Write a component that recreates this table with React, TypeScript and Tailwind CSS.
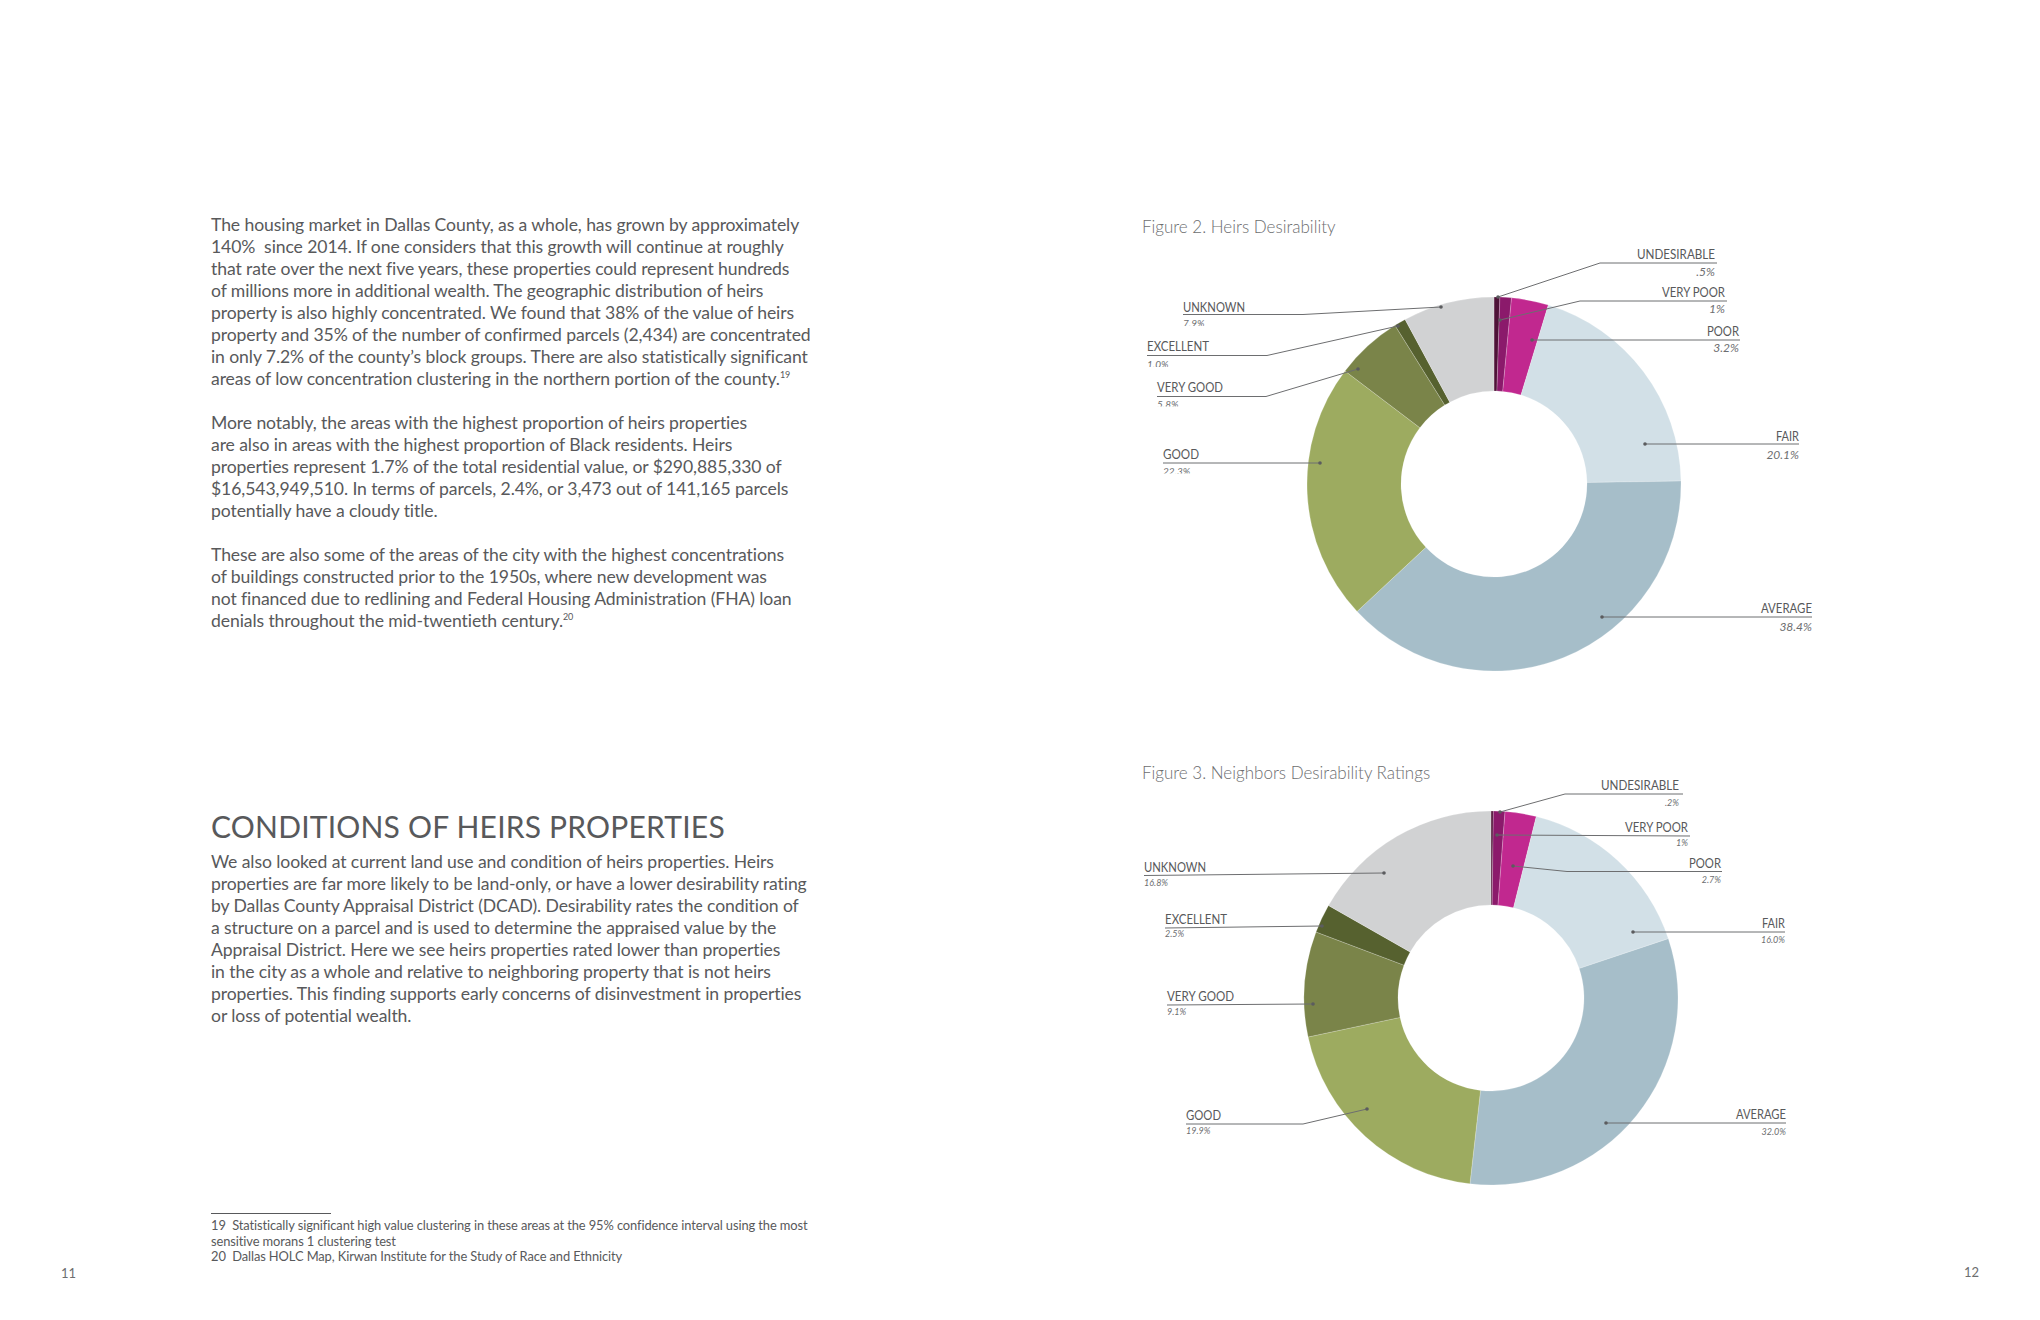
import React from 'react';

// Donut charts: angles measured clockwise from 12 o'clock
type Slice = { value: number; color: string };

type Label = {
  name: string;
  pct: string;
  anchor: 'start' | 'end';
  x: number;
  y: number;
  tl: number;
  line: [number, number][];
  pctY: number;
  pctSize: number;
  clipY?: number;
};

const COLORS = {
  undesirable: '#4e1237',
  veryPoor: '#8b1a6b',
  poor: '#c1288f',
  fair: '#d2e0e7',
  average: '#a6bec9',
  good: '#9dab60',
  veryGood: '#7a8449',
  excellent: '#56612f',
  unknown: '#d1d2d3',
};

const heirsSlices: Slice[] = [
  { value: 0.5, color: COLORS.undesirable },
  { value: 1, color: COLORS.veryPoor },
  { value: 3.2, color: COLORS.poor },
  { value: 20.1, color: COLORS.fair },
  { value: 38.4, color: COLORS.average },
  { value: 22.3, color: COLORS.good },
  { value: 5.8, color: COLORS.veryGood },
  { value: 1.0, color: COLORS.excellent },
  { value: 7.9, color: COLORS.unknown },
];

const neighborSlices: Slice[] = [
  { value: 0.2, color: COLORS.undesirable },
  { value: 1, color: COLORS.veryPoor },
  { value: 2.7, color: COLORS.poor },
  { value: 16.0, color: COLORS.fair },
  { value: 32.0, color: COLORS.average },
  { value: 19.9, color: COLORS.good },
  { value: 9.1, color: COLORS.veryGood },
  { value: 2.5, color: COLORS.excellent },
  { value: 16.8, color: COLORS.unknown },
];

const heirsLabels: Label[] = [
  { name: 'UNDESIRABLE', pct: '.5%', anchor: 'end', x: 1715, y: 259, tl: 78, line: [[1717, 263], [1600, 263], [1498, 297]], pctY: 276, pctSize: 12 },
  { name: 'VERY POOR', pct: '1%', anchor: 'end', x: 1725, y: 297, tl: 63, line: [[1727, 301], [1580, 301], [1500, 320]], pctY: 313, pctSize: 12 },
  { name: 'POOR', pct: '3.2%', anchor: 'end', x: 1739, y: 336, tl: 32, line: [[1740, 340], [1532, 340]], pctY: 352, pctSize: 12 },
  { name: 'FAIR', pct: '20.1%', anchor: 'end', x: 1799, y: 441, tl: 23, line: [[1799, 444], [1645, 444]], pctY: 459, pctSize: 12 },
  { name: 'AVERAGE', pct: '38.4%', anchor: 'end', x: 1812, y: 613, tl: 51, line: [[1812, 617], [1602, 617]], pctY: 631, pctSize: 12 },
  { name: 'UNKNOWN', pct: '7.9%', anchor: 'start', x: 1183, y: 312, tl: 62, line: [[1183, 314.5], [1303, 314.5], [1441, 307]], pctY: 327, pctSize: 10, clipY: 326 },
  { name: 'EXCELLENT', pct: '1.0%', anchor: 'start', x: 1147, y: 351, tl: 62, line: [[1147, 355.5], [1267, 355.5], [1398, 326]], pctY: 368, pctSize: 10, clipY: 367 },
  { name: 'VERY GOOD', pct: '5.8%', anchor: 'start', x: 1157, y: 392, tl: 66, line: [[1157, 396.5], [1266, 396.5], [1358, 369]], pctY: 407.5, pctSize: 10, clipY: 406.5 },
  { name: 'GOOD', pct: '22.3%', anchor: 'start', x: 1163, y: 459, tl: 36, line: [[1163, 463], [1320, 463]], pctY: 474.5, pctSize: 10, clipY: 473.5 },
];

const neighborLabels: Label[] = [
  { name: 'UNDESIRABLE', pct: '.2%', anchor: 'end', x: 1679, y: 790, tl: 78, line: [[1683, 794], [1565, 794], [1500, 812]], pctY: 806, pctSize: 9 },
  { name: 'VERY POOR', pct: '1%', anchor: 'end', x: 1688, y: 832, tl: 63, line: [[1690, 836], [1497, 835]], pctY: 846, pctSize: 9 },
  { name: 'POOR', pct: '2.7%', anchor: 'end', x: 1721, y: 868, tl: 32, line: [[1722, 871.5], [1567, 871.5], [1513, 866]], pctY: 883, pctSize: 9 },
  { name: 'FAIR', pct: '16.0%', anchor: 'end', x: 1785, y: 928, tl: 23, line: [[1785, 932], [1633, 932]], pctY: 943, pctSize: 9 },
  { name: 'AVERAGE', pct: '32.0%', anchor: 'end', x: 1786, y: 1119, tl: 50, line: [[1786, 1123], [1606, 1123]], pctY: 1135, pctSize: 9 },
  { name: 'UNKNOWN', pct: '16.8%', anchor: 'start', x: 1144, y: 872, tl: 62, line: [[1144, 875.5], [1384, 873]], pctY: 886, pctSize: 9 },
  { name: 'EXCELLENT', pct: '2.5%', anchor: 'start', x: 1165, y: 924, tl: 62, line: [[1165, 928], [1322, 926]], pctY: 937, pctSize: 9 },
  { name: 'VERY GOOD', pct: '9.1%', anchor: 'start', x: 1167, y: 1001, tl: 67, line: [[1167, 1005], [1313, 1004]], pctY: 1015, pctSize: 9 },
  { name: 'GOOD', pct: '19.9%', anchor: 'start', x: 1186, y: 1120, tl: 35, line: [[1186, 1124], [1303, 1124], [1367, 1109]], pctY: 1134, pctSize: 9 },
];

const pt = (cx: number, cy: number, r: number, deg: number) => {
  const a = (deg * Math.PI) / 180;
  return [cx + r * Math.sin(a), cy - r * Math.cos(a)];
};

const arcPath = (cx: number, cy: number, r0: number, r1: number, a0: number, a1: number) => {
  const large = a1 - a0 > 180 ? 1 : 0;
  const [x0, y0] = pt(cx, cy, r1, a0);
  const [x1, y1] = pt(cx, cy, r1, a1);
  const [x2, y2] = pt(cx, cy, r0, a1);
  const [x3, y3] = pt(cx, cy, r0, a0);
  return `M${x0} ${y0} A${r1} ${r1} 0 ${large} 1 ${x1} ${y1} L${x2} ${y2} A${r0} ${r0} 0 ${large} 0 ${x3} ${y3} Z`;
};

const LABEL_FONT = '"Lato", "Noto Sans", sans-serif';

const DonutChart = ({ id, slices, labels, cx, cy, viewBox, width, height, className }: {
  id: string;
  slices: Slice[];
  labels: Label[];
  cx: number;
  cy: number;
  viewBox: string;
  width: number;
  height: number;
  className?: string;
}) => {
  const total = slices.reduce((s, x) => s + x.value, 0);
  let acc = 0;
  return (
    <svg width={width} height={height} viewBox={viewBox} className={`block ${className ?? ''}`}>
      <defs>
        {labels.filter(l => l.clipY).map((l, i) => (
          <clipPath key={i} id={`${id}-clip-${i}`}>
            <rect x={l.x - 5} y={l.pctY - 20} width={80} height={(l.clipY as number) - (l.pctY - 20)} />
          </clipPath>
        ))}
      </defs>
      {slices.map((s, i) => {
        const a0 = (acc / total) * 360;
        acc += s.value;
        const a1 = (acc / total) * 360;
        return <path key={i} d={arcPath(cx, cy, 93, 187, a0, a1)} fill={s.color} stroke="#ffffff" strokeOpacity={0.35} strokeWidth={0.6} />;
      })}
      {labels.map((l, i) => {
        const dot = l.line[l.line.length - 1];
        return (
          <g key={i}>
            <polyline points={l.line.map(p => p.join(',')).join(' ')} fill="none" stroke="#6d6e70" strokeWidth={1} />
            <circle cx={dot[0]} cy={dot[1]} r={1.8} fill="#5b5c5e" />
            <text x={l.x} y={l.y} textAnchor={l.anchor} fontSize={12.5} fill="#58595b" textLength={l.tl} lengthAdjust="spacingAndGlyphs" style={{ fontFamily: LABEL_FONT }}>
              {l.name}
            </text>
          </g>
        );
      })}
      {labels.filter(l => l.clipY).map((l, i) => (
        <text key={i} x={l.x} y={l.pctY} textAnchor={l.anchor} fontSize={l.pctSize} fontStyle="italic" fill="#6d6e70" clipPath={`url(#${id}-clip-${i})`} style={{ fontFamily: LABEL_FONT }}>
          {l.pct}
        </text>
      ))}
      {labels.filter(l => !l.clipY).map((l, i) => (
        <text key={i} x={l.x} y={l.pctY} textAnchor={l.anchor} fontSize={l.pctSize} fontStyle="italic" fill="#6d6e70" style={{ fontFamily: LABEL_FONT }}>
          {l.pct}
        </text>
      ))}
    </svg>
  );
};

const para1 = [
  'The housing market in Dallas County, as a whole, has grown by approximately',
  '140%  since 2014. If one considers that this growth will continue at roughly',
  'that rate over the next five years, these properties could represent hundreds',
  'of millions more in additional wealth. The geographic distribution of heirs',
  'property is also highly concentrated. We found that 38% of the value of heirs',
  'property and 35% of the number of confirmed parcels (2,434) are concentrated',
  'in only 7.2% of the county’s block groups. There are also statistically significant',
];

const para2 = [
  'More notably, the areas with the highest proportion of heirs properties',
  'are also in areas with the highest proportion of Black residents. Heirs',
  'properties represent 1.7% of the total residential value, or $290,885,330 of',
  '$16,543,949,510. In terms of parcels, 2.4%, or 3,473 out of 141,165 parcels',
  'potentially have a cloudy title.',
];

const para3 = [
  'These are also some of the areas of the city with the highest concentrations',
  'of buildings constructed prior to the 1950s, where new development was',
  'not financed due to redlining and Federal Housing Administration (FHA) loan',
];

const para4 = [
  'We also looked at current land use and condition of heirs properties. Heirs',
  'properties are far more likely to be land-only, or have a lower desirability rating',
  'by Dallas County Appraisal District (DCAD). Desirability rates the condition of',
  'a structure on a parcel and is used to determine the appraised value by the',
  'Appraisal District. Here we see heirs properties rated lower than properties',
  'in the city as a whole and relative to neighboring property that is not heirs',
  'properties. This finding supports early concerns of disinvestment in properties',
  'or loss of potential wealth.',
];

const Lines = ({ lines }: { lines: string[] }) => (
  <>
    {lines.map((l, i) => (
      <div key={i} className="whitespace-pre">{l}</div>
    ))}
  </>
);

export default function App() {
  return (
    <div className="flex w-[2040px] h-[1320px] bg-white overflow-hidden" style={{ fontFamily: '"Lato", "Noto Sans", sans-serif' }}>
      {/* left page */}
      <div className="w-[1020px] flex flex-col pl-[61px]">
        <div className="pl-[150px] pt-[214px] text-[17.6px] leading-[22px] text-[#58595b] tracking-[-0.1px]">
          <Lines lines={para1} />
          <div className="whitespace-pre">areas of low concentration clustering in the northern portion of the county.<sup className="text-[9px] -top-[7px]">19</sup></div>
          <div className="mt-[22px]">
            <Lines lines={para2} />
          </div>
          <div className="mt-[22px]">
            <Lines lines={para3} />
            <div className="whitespace-pre">denials throughout the mid-twentieth century.<sup className="text-[9px] -top-[7px]">20</sup></div>
          </div>
          <h2 className="mt-[177px] text-[30px] leading-[34px] text-[#58595b] tracking-[0.2px]">CONDITIONS OF HEIRS PROPERTIES</h2>
          <div className="mt-[8px]">
            <Lines lines={para4} />
          </div>
          <div className="mt-[186px] w-[120px] h-px bg-[#58595b]" />
          <div className="mt-[4px] text-[12.9px] leading-[15.5px] text-[#58595b]">
            <div className="whitespace-pre">19  Statistically significant high value clustering in these areas at the 95% confidence interval using the most</div>
            <div>sensitive morans 1 clustering test</div>
            <div className="whitespace-pre">20  Dallas HOLC Map, Kirwan Institute for the Study of Race and Ethnicity</div>
          </div>
        </div>
        <div className="mt-0 text-[13px] leading-[16px] text-[#6d6e70]">11</div>
      </div>

      {/* right page */}
      <div className="w-[1020px] flex flex-col pl-[120px] pt-[217px]">
        <div className="ml-[2px] text-[17px] leading-[20px] font-light text-[#6d6e70]">Figure 2. Heirs Desirability</div>
        <DonutChart id="heirs" slices={heirsSlices} labels={heirsLabels} cx={1494} cy={484} viewBox="1140 237 700 450" width={700} height={450} />
        <div className="mt-[76px] ml-[2px] text-[17px] leading-[20px] font-light text-[#6d6e70]">Figure 3. Neighbors Desirability Ratings</div>
        <DonutChart id="neighbors" slices={neighborSlices} labels={neighborLabels} cx={1491} cy={998} viewBox="1140 775 700 428" width={700} height={428} className="-mt-[8px]" />
        <div className="mt-[61px] flex justify-end pr-[61px] text-[13px] leading-[16px] text-[#6d6e70]">12</div>
      </div>
    </div>
  );
}
